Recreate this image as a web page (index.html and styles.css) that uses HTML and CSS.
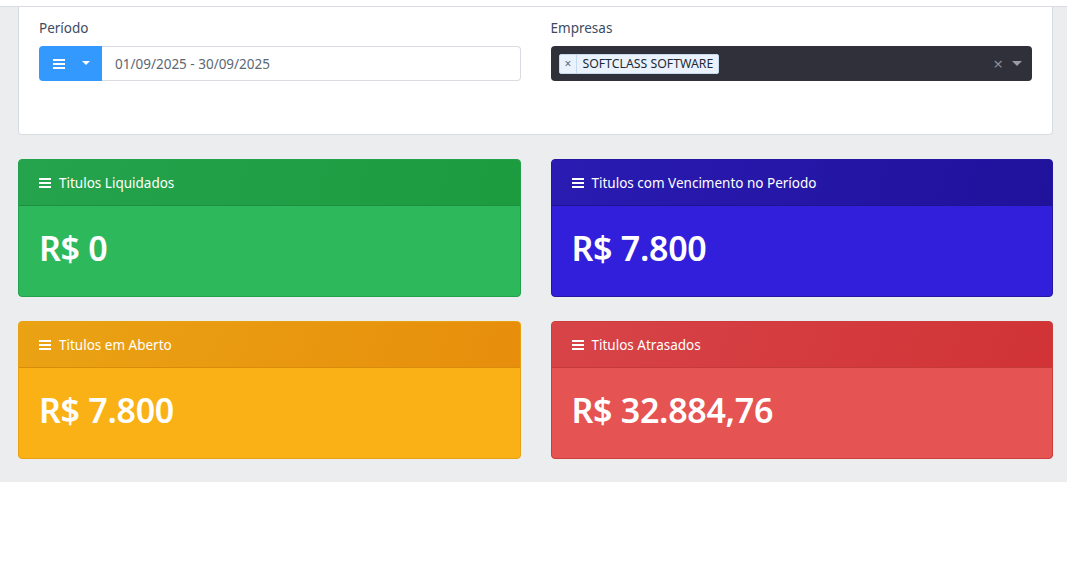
FILE: index.html
```html
<!DOCTYPE html>
<html lang="pt-BR">
<head>
<meta charset="utf-8">
<title>Dashboard</title>
<link rel="stylesheet" href="styles.css">
</head>
<body>
<div class="topbar"></div>
<main class="main">
  <section class="filter-card">
    <div class="filter-grid">
      <div class="field">
        <label class="field-label">Período</label>
        <div class="input-group">
          <button class="btn-menu" type="button">
            <svg class="ico-bars" viewBox="0 0 12 10" width="12" height="10"><rect x="0" y="0" width="12" height="2" fill="#fff"/><rect x="0" y="4" width="12" height="2" fill="#fff"/><rect x="0" y="8" width="12" height="2" fill="#fff"/></svg>
            <span class="caret caret-white"></span>
          </button>
          <div class="date-input">01/09/2025 - 30/09/2025</div>
        </div>
      </div>
      <div class="field">
        <label class="field-label">Empresas</label>
        <div class="select">
          <span class="tag"><span class="tag-x">×</span><span class="tag-text">SOFTCLASS SOFTWARE</span></span>
          <span class="select-actions">
            <span class="clear">×</span>
            <span class="caret caret-gray"></span>
          </span>
        </div>
      </div>
    </div>
  </section>

  <section class="stats">
    <div class="stat stat-green">
      <div class="stat-head"><svg class="ico-bars" viewBox="0 0 12 10" width="12" height="10"><rect x="0" y="0" width="12" height="2" fill="#fff"/><rect x="0" y="4" width="12" height="2" fill="#fff"/><rect x="0" y="8" width="12" height="2" fill="#fff"/></svg><span>Titulos Liquidados</span></div>
      <div class="stat-body">R$ 0</div>
    </div>
    <div class="stat stat-blue">
      <div class="stat-head"><svg class="ico-bars" viewBox="0 0 12 10" width="12" height="10"><rect x="0" y="0" width="12" height="2" fill="#fff"/><rect x="0" y="4" width="12" height="2" fill="#fff"/><rect x="0" y="8" width="12" height="2" fill="#fff"/></svg><span>Titulos com Vencimento no Período</span></div>
      <div class="stat-body">R$ 7.800</div>
    </div>
    <div class="stat stat-orange">
      <div class="stat-head"><svg class="ico-bars" viewBox="0 0 12 10" width="12" height="10"><rect x="0" y="0" width="12" height="2" fill="#fff"/><rect x="0" y="4" width="12" height="2" fill="#fff"/><rect x="0" y="8" width="12" height="2" fill="#fff"/></svg><span>Titulos em Aberto</span></div>
      <div class="stat-body">R$ 7.800</div>
    </div>
    <div class="stat stat-red">
      <div class="stat-head"><svg class="ico-bars" viewBox="0 0 12 10" width="12" height="10"><rect x="0" y="0" width="12" height="2" fill="#fff"/><rect x="0" y="4" width="12" height="2" fill="#fff"/><rect x="0" y="8" width="12" height="2" fill="#fff"/></svg><span>Titulos Atrasados</span></div>
      <div class="stat-body">R$ 32.884,76</div>
    </div>
  </section>
</main>
</body>
</html>
```

FILE: styles.css
```css
* { box-sizing: border-box; }
html, body { margin: 0; padding: 0; }
body {
  background: #ffffff;
  font-family: "Noto Sans", "Open Sans", Arial, sans-serif;
  font-size: 14px;
  color: #3c4b64;
}
.topbar {
  height: 7px;
  background: #ffffff;
  border-bottom: 1px solid #d8dbe0;
}
.main {
  background: #ebedef;
  padding: 0 14px 23px 18px;
}
.filter-card {
  background: #ffffff;
  border: 1px solid #d8dbe0;
  border-top: none;
  border-radius: 0 0 4px 4px;
  padding: 11px 20px 53px 20px;
}
.filter-grid {
  display: grid;
  grid-template-columns: 1fr 1fr;
  column-gap: 30px;
}
.field-label {
  display: block;
  line-height: 21px;
  margin-bottom: 7px;
  font-size: 13.5px;
  color: #3c4b64;
}
.input-group {
  display: flex;
  height: 35px;
}
.btn-menu {
  width: 63px;
  height: 35px;
  border: none;
  border-radius: 4px 0 0 4px;
  background: #3399ff;
  display: flex;
  align-items: center;
  justify-content: center;
  gap: 17px;
  padding: 0 0 0 2px;
}
.caret {
  display: inline-block;
  width: 0;
  height: 0;
  border-left: 4px solid transparent;
  border-right: 4px solid transparent;
  border-top: 4px solid #fff;
}
.caret-white { margin-top: -2px; }
.caret-gray { border-top-color: #9a9ba3; border-left-width: 5px; border-right-width: 5px; border-top-width: 5px; }
.date-input {
  flex: 1;
  border: 1px solid #d8dbe0;
  border-left: none;
  border-radius: 0 4px 4px 0;
  display: flex;
  align-items: center;
  padding-left: 13px;
  color: #5c6873;
  font-size: 13.5px;
}
.select {
  height: 35px;
  background: #2f3039;
  border-radius: 4px;
  display: flex;
  align-items: center;
  padding: 0 10px 0 8px;
}
.tag {
  display: flex;
  align-items: stretch;
  height: 20px;
  background: #eaf3fd;
  border: 1px solid #c6d9ef;
  border-radius: 2px;
  font-size: 12px;
  color: #1e2a36;
}
.tag-x {
  display: flex;
  align-items: center;
  padding: 0 5px;
  border-right: 1px solid #c6d9ef;
  color: #5c6873;
  font-size: 12px;
}
.tag-text {
  display: flex;
  align-items: center;
  padding: 0 5px 0 5px;
  font-size: 12.3px;
}
.select-actions {
  margin-left: auto;
  display: flex;
  align-items: center;
  gap: 9px;
}
.clear {
  color: #8a8b93;
  font-size: 17px;
  line-height: 1;
}
.stats {
  display: grid;
  grid-template-columns: 1fr 1fr;
  column-gap: 30px;
  row-gap: 24px;
  margin-top: 24px;
}
.stat {
  border-radius: 4px;
  border: 1px solid;
  overflow: hidden;
  color: #ffffff;
}
.stat-head {
  height: 46px;
  display: flex;
  align-items: center;
  gap: 8px;
  padding: 1px 20px 0 20px;
  font-size: 13.5px;
  border-bottom: 1px solid;
}
.stat-body {
  height: 90px;
  display: flex;
  align-items: center;
  padding: 0 20px 7px 20px;
  font-size: 34px;
  font-weight: 600;
  letter-spacing: -0.3px;
}
.stat-green { border-color: #22a04b; background: #2eb85c; }
.stat-green .stat-head { background: linear-gradient(110deg, #25a34d, #1c9b3f); border-bottom-color: #1d8f40; }
.stat-blue { border-color: #24169f; background: #321fdb; }
.stat-blue .stat-head { background: linear-gradient(110deg, #2a1bb2, #20129b); border-bottom-color: #1f1393; }
.stat-orange { border-color: #e9a114; background: #f9b115; }
.stat-orange .stat-head { background: linear-gradient(110deg, #eaa314, #e78e0c); border-bottom-color: #d98c0c; }
.stat-red { border-color: #cd3c3c; background: #e55353; }
.stat-red .stat-head { background: linear-gradient(110deg, #d74448, #d13336); border-bottom-color: #c43a3a; }
```
